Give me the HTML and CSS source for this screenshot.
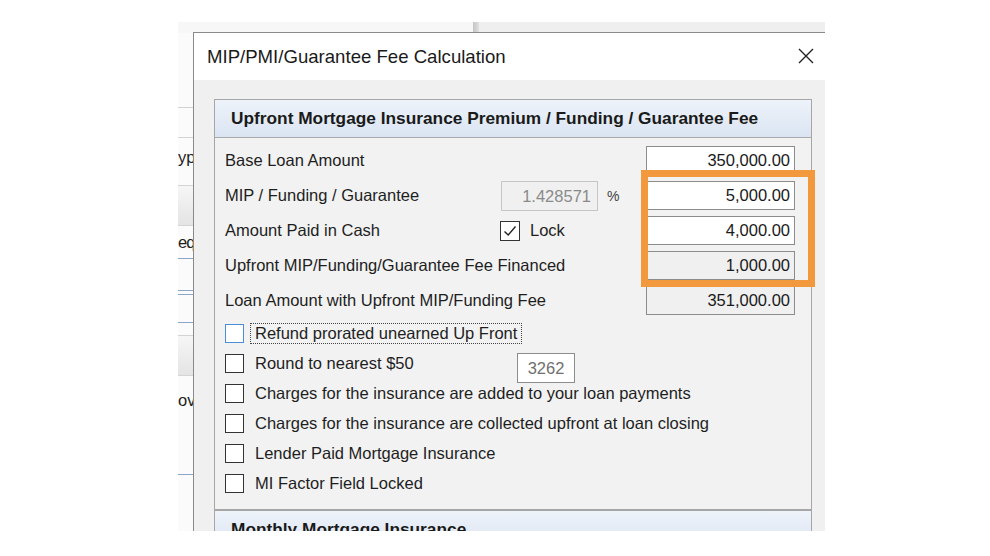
FILE: index.html
```html
<!DOCTYPE html>
<html>
<head>
<meta charset="utf-8">
<link rel="stylesheet" href="styles.css">
</head>
<body>
<div class="shot">
  <div class="app">
    <div class="app-top"><div class="top-left"></div><div class="splitter"></div><div class="top-right"></div></div>
    <div class="app-side">
      <div class="sp" style="height:74px"></div>
      <div class="hl"></div>
      <div class="sp" style="height:29px"></div>
      <div class="hl"></div>
      <div class="side-text" style="height:38px">yp</div>
      <div class="sp" style="height:9px"></div>
      <div class="hl"></div>
      <div class="side-btn"></div>
      <div class="hl"></div>
      <div class="side-text side-eq" style="height:32px">eq</div>
      <div class="bl"></div>
      <div class="sp" style="height:31px"></div>
      <div class="bl"></div>
      <div class="sp" style="height:3px"></div>
      <div class="bl"></div>
      <div class="sp" style="height:27px"></div>
      <div class="bl"></div>
      <div class="sp" style="height:12px"></div>
      <div class="hl"></div>
      <div class="side-btn"></div>
      <div class="hl"></div>
      <div class="side-text" style="height:48px">ov</div>
      <div class="sp" style="height:50px"></div>
      <div class="bl"></div>
    </div>
  </div>

  <div class="dialog">
    <div class="titlebar">
      <span class="title">MIP/PMI/Guarantee Fee Calculation</span>
      <svg class="close" width="16" height="16" viewBox="0 0 16 16"><path d="M1 1 L15 15 M15 1 L1 15" stroke="#222" stroke-width="1.4" fill="none"/></svg>
    </div>
    <div class="dlg-body">
      <div class="group">
        <div class="group-head">Upfront Mortgage Insurance Premium / Funding / Guarantee Fee</div>
        <div class="group-body">
          <div class="row">
            <span class="lbl">Base Loan Amount</span>
            <span class="mid"></span>
            <span class="box">350,000.00</span>
          </div>
          <div class="row">
            <span class="lbl">MIP / Funding / Guarantee</span>
            <span class="mid"><span class="pct">1.428571</span><span class="pctsign">%</span></span>
            <span class="box">5,000.00</span>
          </div>
          <div class="row">
            <span class="lbl">Amount Paid in Cash</span>
            <span class="mid"><span class="cb cb-lock"><svg width="18" height="18" viewBox="0 0 18 18"><path d="M3.5 9.5 L7.2 13 L14.5 4.5" stroke="#222" stroke-width="1.4" fill="none"/></svg></span><span class="lock">Lock</span></span>
            <span class="box">4,000.00</span>
          </div>
          <div class="row">
            <span class="lbl">Upfront MIP/Funding/Guarantee Fee Financed</span>
            <span class="mid"></span>
            <span class="box ro">1,000.00</span>
          </div>
          <div class="row">
            <span class="lbl">Loan Amount with Upfront MIP/Funding Fee</span>
            <span class="mid"></span>
            <span class="box ro">351,000.00</span>
          </div>

          <div class="crow">
            <span class="cb cb-focus"></span>
            <span class="focus">Refund prorated unearned Up Front</span>
          </div>
          <div class="crow">
            <span class="cb"></span>
            <span class="ctext ctext-fixed">Round to nearest $50</span>
            <span class="num">3262</span>
          </div>
          <div class="crow">
            <span class="cb"></span>
            <span class="ctext">Charges for the insurance are added to your loan payments</span>
          </div>
          <div class="crow">
            <span class="cb"></span>
            <span class="ctext">Charges for the insurance are collected upfront at loan closing</span>
          </div>
          <div class="crow">
            <span class="cb"></span>
            <span class="ctext">Lender Paid Mortgage Insurance</span>
          </div>
          <div class="crow">
            <span class="cb"></span>
            <span class="ctext">MI Factor Field Locked</span>
          </div>
        </div>
      </div>
      <div class="group group2">
        <div class="group-head">Monthly Mortgage Insurance</div>
      </div>
    </div>
  </div>

  <div class="highlight"></div>
</div>
</body>
</html>
```

FILE: styles.css
```css
* { box-sizing: border-box; }
html, body { margin: 0; padding: 0; background: #ffffff; }
body {
  width: 990px;
  height: 556px;
  overflow: hidden;
  font-family: "Liberation Sans", Arial, sans-serif;
  color: #1e1e1e;
}

.shot {
  position: relative;
  margin: 22px 0 0 178px;
  width: 647px;
  height: 509px;
  overflow: hidden;
  background: #fbfbfb;
}

.app-top { display: flex; height: 11px; }
.top-left { width: 295px; background: #f7f7f7; }
.splitter { width: 6px; background: linear-gradient(90deg, #c4c4c4, #e0e0e0); }
.top-right { flex: 1; background: #efefef; }

.app-side {
  width: 60px;
  display: flex;
  flex-direction: column;
  font-size: 16.5px;
  color: #1e1e1e;
}
.sp { flex: none; }
.hl { height: 1px; background: #d4d4d4; flex: none; }
.bl { height: 1px; background: #8aa6c9; flex: none; }
.side-text { display: flex; align-items: center; flex: none; }
.side-eq { letter-spacing: -1px; }
.side-btn { height: 39px; flex: none; background: linear-gradient(#f6f6f6, #e4e4e4); }

.dialog {
  position: absolute;
  left: 15px;
  top: 10px;
  width: 660px;
  height: 560px;
  border: 1px solid #8a8a8a;
  background: #f0f0f0;
}

.titlebar {
  height: 47px;
  background: #ffffff;
  display: flex;
  align-items: center;
  padding-left: 13px;
}
.title { flex: 1; font-size: 18.6px; color: #1a1a1a; }
.close { margin-right: 38px; margin-top: -2px; }

.dlg-body { padding: 19px 0 0 20px; }

.group {
  width: 598px;
  border: 1px solid #a6a6a6;
  background: #f2f2f2;
}
.group2 { border-bottom: none; }
.group-head {
  height: 38px;
  line-height: 37px;
  border-bottom: 1px solid #aaaaaa;
  background: linear-gradient(#eef3fa, #dae4f2);
  padding-left: 16px;
  font-weight: bold;
  font-size: 17.3px;
  color: #1a1a1a;
  white-space: nowrap;
}

.group-body { padding: 5px 0 11px 10px; font-size: 16.5px; }

.row {
  display: grid;
  grid-template-columns: 275px 146px 149px;
  height: 35px;
  align-items: center;
}
.lbl { white-space: nowrap; }
.mid { display: flex; align-items: center; }
.box {
  height: 29px;
  line-height: 27px;
  border: 1px solid #8c8c8c;
  background: #ffffff;
  text-align: right;
  padding-right: 4px;
  color: #1a1a1a;
}
.box.ro { background: #f0f0f0; }

.pct {
  width: 97px;
  height: 30px;
  line-height: 28px;
  margin-left: 1px;
  border: 1px solid #c6c6c6;
  background: #f0f0f0;
  color: #8a8a8a;
  text-align: right;
  padding-right: 6px;
}
.pctsign { margin-left: 9px; font-size: 14px; color: #444; }

.cb {
  width: 19px;
  height: 19px;
  border: 1px solid #333333;
  background: #ffffff;
  flex: none;
  display: flex;
  align-items: center;
  justify-content: center;
}
.cb-lock { width: 20px; height: 20px; }
.cb-focus { border-color: #4a8fd8; }
.lock { margin-left: 10px; }

.crow {
  display: flex;
  align-items: center;
  height: 30px;
}
.ctext { margin-left: 11px; white-space: nowrap; }
.ctext-fixed { flex: 0 0 262px; }
.focus {
  margin-left: 6px;
  padding: 0 4px;
  height: 21px;
  line-height: 19px;
  border: 1px dotted #444;
  white-space: nowrap;
}
.num {
  align-self: flex-start;
  margin-top: 5px;
  width: 58px;
  height: 30px;
  line-height: 28px;
  border: 1px solid #8c8c8c;
  background: #ffffff;
  color: #707070;
  text-align: center;
}

.highlight {
  position: absolute;
  left: 463px;
  top: 148px;
  width: 174px;
  height: 117px;
  border: 7px solid #f2993e;
}
```
